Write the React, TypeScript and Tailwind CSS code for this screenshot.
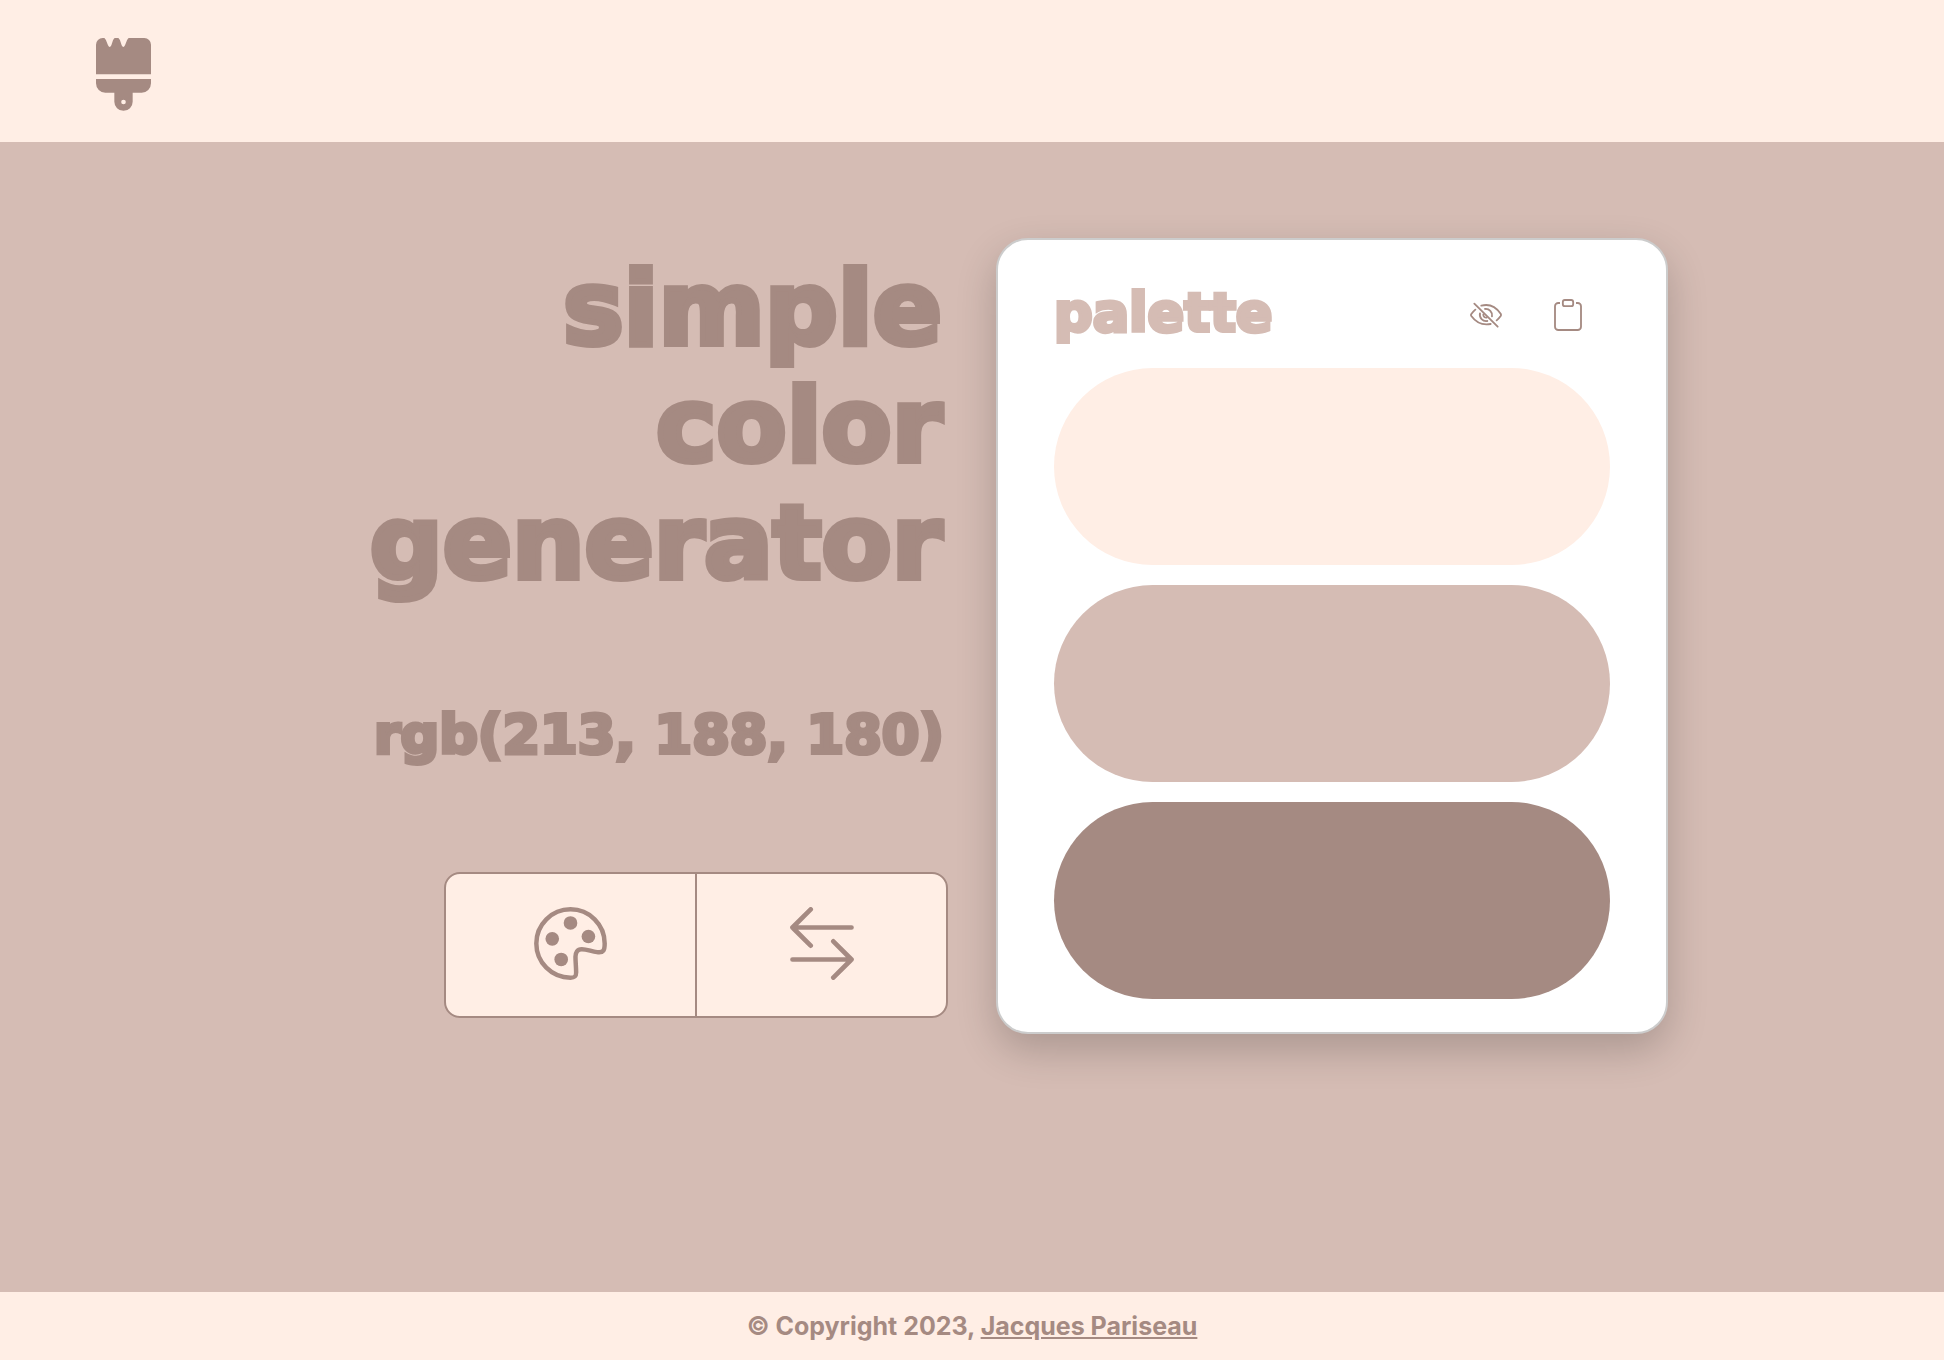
import type { ReactNode } from "react";

const swatches = [
  { name: "Light", className: "bg-[#ffeee5]" },
  { name: "Base", className: "bg-[#d5bcb4]" },
  { name: "Dark", className: "bg-[#a58a82]" },
];

function BrushLogo() {
  return (
    <svg viewBox="108 84 165 219" className="h-[73px] w-[55px]" fill="currentColor" aria-hidden="true">
      <path d="M108 193V104a20 20 0 0 1 20-20h5q3 2 5 7l6 15q5 10 10 0l5-15q2-5 5-7h11q3 2 5 7l5 15q5 10 10 0l6-15q2-5 5-7h47a20 20 0 0 1 20 20v89z" />
      <path
        fillRule="evenodd"
        d="M108 207h165v13a28 28 0 0 1-28 28h-27v27a27.5 27.5 0 0 1-55 0v-27h-27a28 28 0 0 1-28-28zM190.500 269a7 7 0 1 0 0 14a7 7 0 1 0 0-14z"
      />
    </svg>
  );
}

function PaletteIcon() {
  return (
    <svg viewBox="72 50 220 220" className="size-[73px]" fill="none" aria-hidden="true">
      <path
        d="M182 263A103 103 0 1 1 285 160C285 180 282 189 262 186C245 184 232 177 216 177C202 177 197 188 197 200C197 216 199 232 199 247C199 259 196 263 182 263Z"
        stroke="currentColor"
        strokeWidth="13.500"
      />
      <g fill="currentColor">
        <circle cx="182" cy="98" r="20.500" />
        <circle cx="127" cy="146" r="20.500" />
        <circle cx="236" cy="139" r="20.500" />
        <circle cx="154" cy="208" r="20.500" />
      </g>
    </svg>
  );
}

function SwapIcon() {
  return (
    <svg
      viewBox="0 0 64 73"
      className="h-[73px] w-16"
      fill="none"
      stroke="currentColor"
      strokeWidth="4.700"
      strokeLinecap="round"
      strokeLinejoin="round"
      aria-hidden="true"
    >
      <path d="M20.700 2.400L2.500 20.500L20.700 38.700M2.500 20.500H61.500" />
      <path d="M43.300 34.300L61.500 52.500L43.300 70.600M61.500 52.500H2.500" />
    </svg>
  );
}

function EyeOffIcon() {
  return (
    <svg
      viewBox="90 27 96 96"
      className="size-8"
      fill="none"
      stroke="currentColor"
      strokeWidth="5.500"
      strokeLinecap="round"
      strokeLinejoin="round"
      aria-hidden="true"
    >
      <path d="M103 41L173 110" />
      <path d="M124 47C150 40 170 54 182 71Q184 75 182 78Q177 85 170 91" />
      <path d="M106 59Q99 65 94 72Q92 75 94 78C107 96 126 107 152 102" />
      <path d="M135 57A19 19 0 0 1 156 79" />
      <path d="M120 70A19 19 0 0 0 142 93" />
      <path d="M130 73A9 9 0 0 0 140 83" />
    </svg>
  );
}

function ClipboardIcon() {
  return (
    <svg
      viewBox="66 27 96 96"
      className="size-8"
      fill="none"
      stroke="currentColor"
      strokeWidth="5.500"
      strokeLinecap="butt"
      aria-hidden="true"
    >
      <path d="M90 39H85a10 10 0 0 0-10 10V110a10 10 0 0 0 10 10H143a10 10 0 0 0 10-10V49a10 10 0 0 0-10-10H138" />
      <rect x="98.500" y="30" width="31" height="18.500" rx="6" />
    </svg>
  );
}

function ActionButton({ label, children }: { label: string; children: ReactNode }) {
  return (
    <button type="button" aria-label={label} className="flex flex-1 items-center justify-center pb-1">
      {children}
    </button>
  );
}

function ToolButton({ label, children }: { label: string; children: ReactNode }) {
  return (
    <button type="button" aria-label={label} className="flex h-16 w-[82px] items-center justify-center">
      {children}
    </button>
  );
}

export default function App() {
  return (
    <div className="flex min-h-screen flex-col bg-[#d5bcb4] font-['DejaVu_Sans',sans-serif] text-[#a58a82]">
      <header className="bg-[#ffeee5] px-24 pt-[38px] pb-[31px]">
        <a href="#" aria-label="Home" className="block w-fit">
          <BrushLogo />
        </a>
      </header>

      <main className="mx-auto grid w-full max-w-[1392px] flex-1 grid-cols-2 items-start gap-12 pt-24 pb-12">
        <section className="flex flex-col items-end pt-3">
          <h1 className="pr-1.5 text-right text-[102px] leading-[117px] font-bold [-webkit-text-stroke:6px_#a58a82]">
            simple
            <br />
            color
            <br />
            generator
          </h1>
          <p className="mt-[102px] mb-[105px] pr-1 text-right text-[54px] leading-16 font-bold whitespace-nowrap [-webkit-text-stroke:4px_#a58a82]">
            rgb(213, 188, 180)
          </p>
          <div className="flex h-[146px] w-3/4 divide-x-2 divide-[#a58a82] overflow-hidden rounded-2xl border-2 border-[#a58a82] bg-[#ffeee5]">
            <ActionButton label="Generate color">
              <PaletteIcon />
            </ActionButton>
            <ActionButton label="Swap colors">
              <SwapIcon />
            </ActionButton>
          </div>
        </section>

        <section className="rounded-[32px] border-2 border-[#cccccc] bg-white px-14 pt-[43px] pb-[33px] shadow-[0_16px_40px_rgba(0,0,0,0.2)]">
          <div className="flex items-center justify-between">
            <h2 className="pb-1 text-[54px] leading-[60px] font-bold text-[#d5bcb4] [-webkit-text-stroke:4px_#d5bcb4]">
              palette
            </h2>
            <div className="flex pr-px">
              <ToolButton label="Hide color values">
                <EyeOffIcon />
              </ToolButton>
              <ToolButton label="Copy palette">
                <ClipboardIcon />
              </ToolButton>
            </div>
          </div>
          <ul className="mt-[21px] flex flex-col gap-5">
            {swatches.map((s) => (
              <li key={s.name} aria-label={s.name} className={`h-[197px] rounded-full ${s.className}`} />
            ))}
          </ul>
        </section>
      </main>

      <footer className="bg-[#ffeee5] py-4 text-center font-['Inter',sans-serif] text-[25px] leading-9 font-bold">
        © Copyright 2023,{" "}
        <a href="#" className="underline">
          Jacques Pariseau
        </a>
      </footer>
    </div>
  );
}
